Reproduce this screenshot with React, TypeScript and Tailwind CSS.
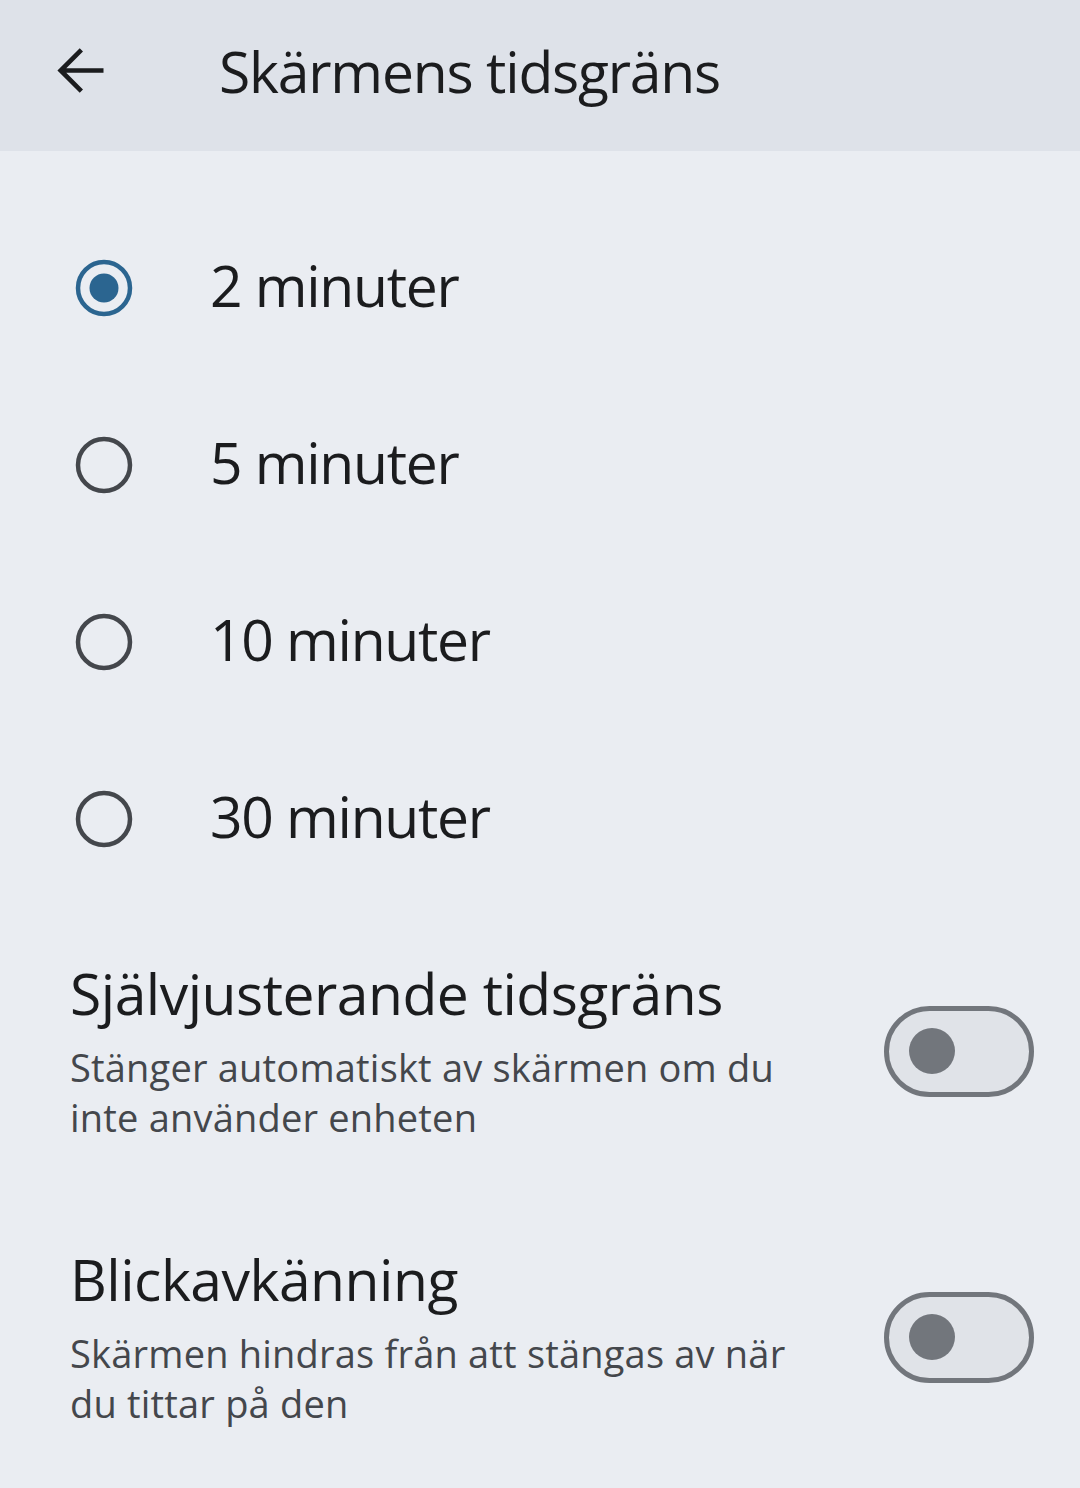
import React from "react";

const font = { fontFamily: '"Open Sans", "Noto Sans", sans-serif' };

function Radio({ checked }: { checked: boolean }) {
  return (
    <svg width="60" height="60" viewBox="0 0 60 60">
      <circle cx="30" cy="30" r="26" fill="none" stroke={checked ? "#2b6590" : "#44474c"} strokeWidth="4.5" />
      {checked && <circle cx="30" cy="30" r="14.5" fill="#2b6590" />}
    </svg>
  );
}

function Toggle() {
  return (
    <div className="w-[150px] h-[91px] rounded-full border-[5px] border-[#72767c] bg-[#e0e3e8] flex items-center pl-[20px] shrink-0">
      <div className="w-[46px] h-[46px] rounded-full bg-[#72767c]" />
    </div>
  );
}

export default function App() {
  const options = ["2 minuter", "5 minuter", "10 minuter", "30 minuter"];
  return (
    <div className="w-[1080px] h-[1488px] bg-[#eaedf2] overflow-hidden" style={font}>
      <div className="h-[151px] bg-[#dee2e9] flex items-center">
        <div className="w-[219px] pl-[46px] flex items-center pb-[10px]">
          <svg width="69" height="69" viewBox="0 0 24 24" fill="none" stroke="#1b1c1e" strokeWidth="1.6" strokeLinecap="butt" strokeLinejoin="miter">
            <path d="M20 12H5.2M12.3 4.8L5.1 12l7.2 7.2" />
          </svg>
        </div>
        <div className="text-[57px] text-[#1b1c1e] tracking-[-1.2px] leading-none pb-[8px]">Skärmens tidsgräns</div>
      </div>
      <div className="pt-[48px] flex flex-col">
        {options.map((o, i) => (
          <div key={o} className="h-[177px] flex items-center">
            <div className="w-[210px] pl-[74px] flex items-center">
              <Radio checked={i === 0} />
            </div>
            <div className="text-[57px] text-[#1b1c1e] tracking-[-1.3px] leading-none pb-[4px]">{o}</div>
          </div>
        ))}
      </div>
      <div className="pl-[70px] pr-[46px] pt-[53px] flex flex-col gap-[104px]">
        <div className="flex items-center justify-between">
          <div className="flex flex-col">
            <div className="text-[57px] text-[#1b1c1e] tracking-[-0.5px] leading-[66px]">Självjusterande tidsgräns</div>
            <div className="text-[38px] text-[#44474c] tracking-[0.2px] leading-[50px] w-[740px] mt-[16px]">Stänger automatiskt av skärmen om du inte använder enheten</div>
          </div>
          <Toggle />
        </div>
        <div className="flex items-center justify-between">
          <div className="flex flex-col">
            <div className="text-[57px] text-[#1b1c1e] tracking-[-0.5px] leading-[66px]">Blickavkänning</div>
            <div className="text-[38px] text-[#44474c] tracking-[0.2px] leading-[50px] w-[740px] mt-[16px]">Skärmen hindras från att stängas av när du tittar på den</div>
          </div>
          <Toggle />
        </div>
      </div>
    </div>
  );
}
